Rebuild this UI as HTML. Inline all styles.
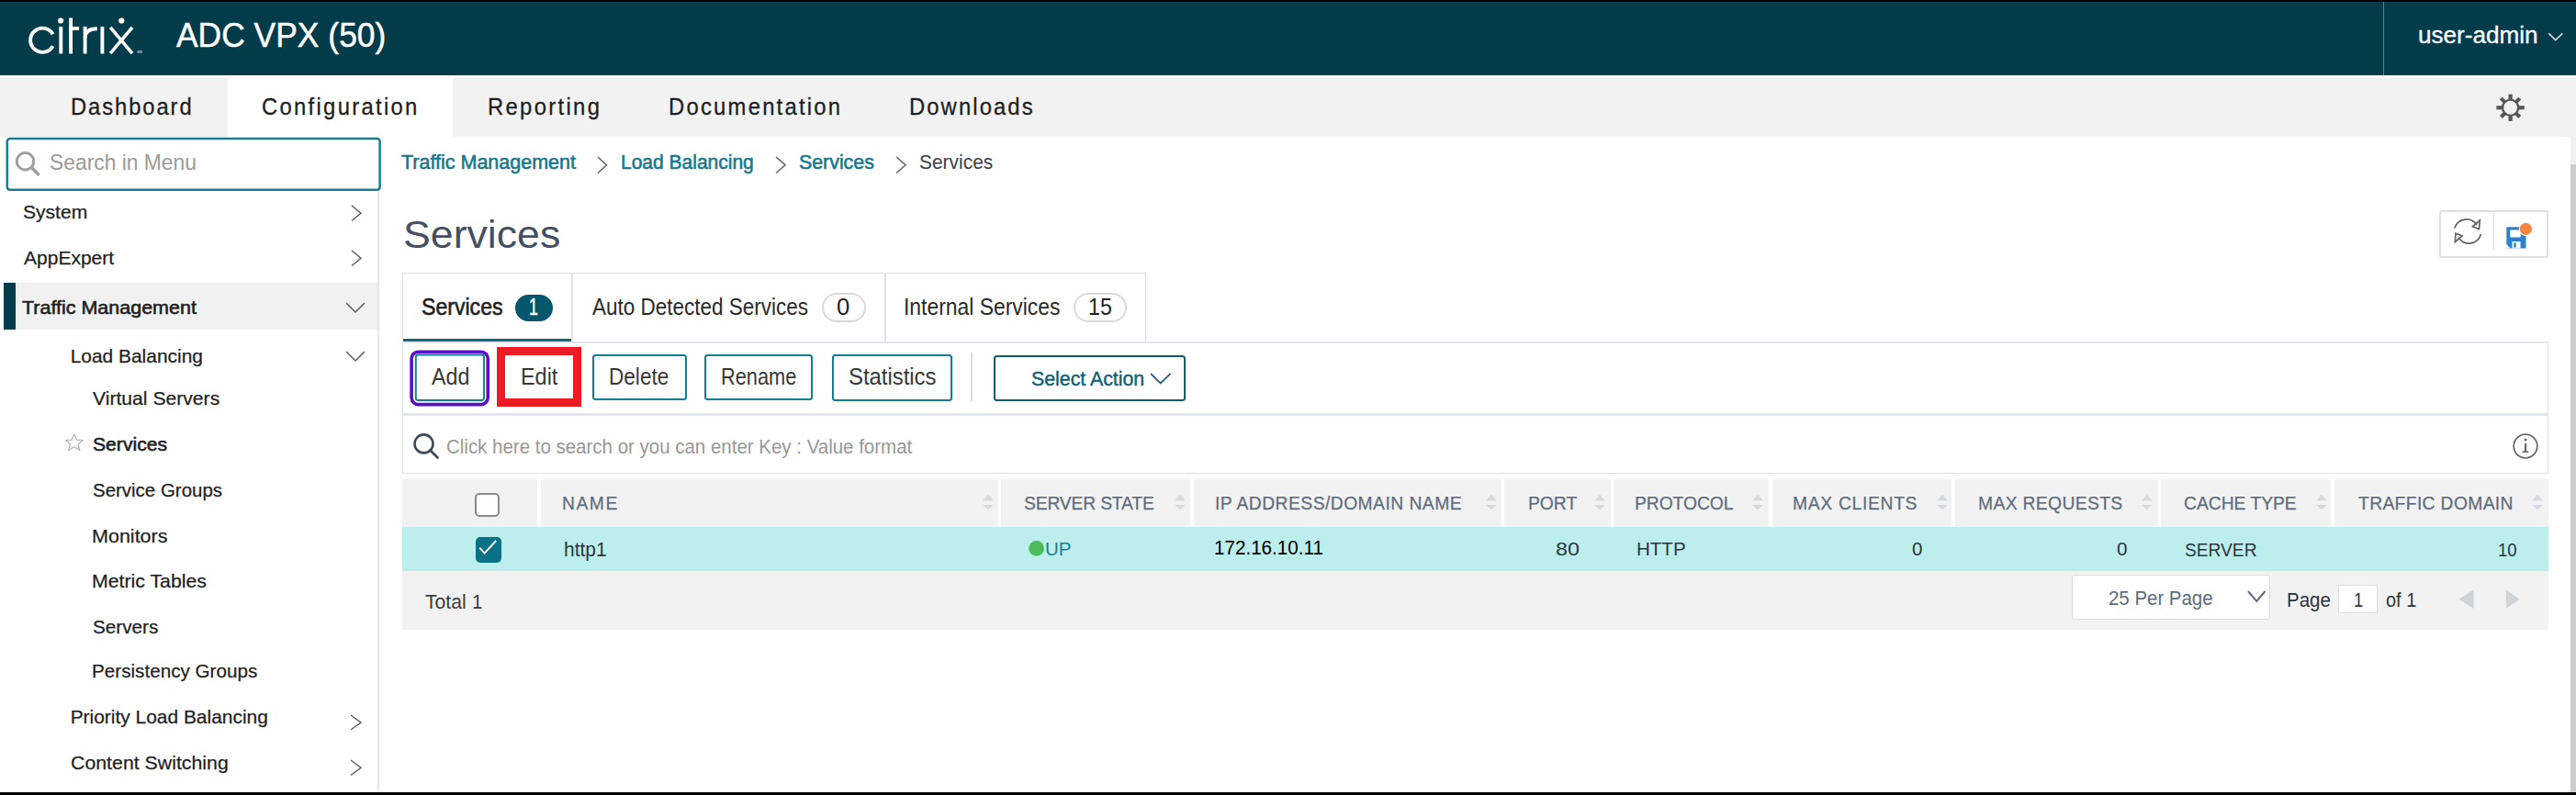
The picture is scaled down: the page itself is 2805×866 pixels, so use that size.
<!DOCTYPE html>
<html><head><meta charset="utf-8"><title>Citrix ADC - Services</title>
<style>
html,body{margin:0;padding:0;}
body{width:2805px;height:866px;overflow:hidden;position:relative;background:#fff;font-family:"Liberation Sans",sans-serif;}
.a{position:absolute;box-sizing:border-box;}
.t{position:absolute;white-space:nowrap;line-height:1;transform-origin:0 0;font-family:"Liberation Sans",sans-serif;}
svg{position:absolute;overflow:visible;}
</style></head><body>

<div class="a" style="left:0;top:0;width:2805px;height:2px;background:#000"></div>
<div class="a" style="left:0;top:2px;width:2805px;height:80px;background:#023c4b"></div>
<div class="a" style="left:2594.5px;top:2px;width:1.5px;height:80px;background:#5b7d87"></div>
<svg style="left:0;top:0" width="170" height="70" viewBox="0 0 170 70">
 <g fill="none" stroke="#fff" stroke-width="3.9">
  <path d="M57.6 37.3 A13.1 13.1 0 1 0 57.6 50.2"/>
  <line x1="66.3" y1="29" x2="66.3" y2="58.5"/>
  <line x1="77.1" y1="19.5" x2="77.1" y2="58.5"/>
  <line x1="75" y1="31" x2="86.1" y2="31"/>
  <line x1="92.6" y1="29" x2="92.6" y2="58.5"/>
  <path d="M92.6 41 C93 34 97.5 31.3 105.8 31.3"/>
  <line x1="111.4" y1="29" x2="111.4" y2="58.5"/>
 </g>
 <g fill="none" stroke="#fff" stroke-width="3.6" stroke-linecap="butt">
  <line x1="120.2" y1="29.8" x2="144" y2="58.2"/>
  <line x1="144" y1="29.8" x2="120.2" y2="58.2"/>
 </g>
 <circle cx="66.1" cy="22.5" r="3.1" fill="#fff"/>
 <circle cx="132.3" cy="22.5" r="3.1" fill="#fff"/>
 <rect x="149.5" y="55" width="5.5" height="3" fill="#6f8c94"/>
</svg>
<svg style="left:2770px;top:30px" width="26" height="20" viewBox="0 0 26 20"><path d="M5.3 6.4 L12.8 13.6 L20.3 6.4" fill="none" stroke="#d5dde0" stroke-width="1.5"/></svg>

<div class="a" style="left:0;top:82px;width:2805px;height:3px;background:#fbfbfb"></div>
<div class="a" style="left:0;top:85px;width:2805px;height:63.5px;background:#f2f2f2"></div>
<div class="a" style="left:247.5px;top:85px;width:245px;height:64px;background:#fff"></div>
<svg style="left:2713px;top:97px" width="41" height="41" viewBox="0 0 41 41">
 <g transform="translate(20.6,20.3)" fill="#575757">
  <rect x="-2.1" y="-14.6" width="4.2" height="6.5" />
  <rect x="-2.1" y="8.1" width="4.2" height="6.5" />
  <rect x="-15.2" y="-2.1" width="6.8" height="4.2" />
  <rect x="8.4" y="-2.1" width="6.8" height="4.2" />
  <g transform="rotate(45)">
   <rect x="-2.1" y="-14.4" width="4.2" height="6" />
   <rect x="-2.1" y="8.4" width="4.2" height="6" />
   <rect x="-14.4" y="-2.1" width="6" height="4.2" />
   <rect x="8.4" y="-2.1" width="6" height="4.2" />
  </g>
  <circle r="8.6" fill="none" stroke="#575757" stroke-width="2.3"/>
 </g>
</svg>

<!-- sidebar -->
<svg style="left:0;top:140px" width="430" height="75" viewBox="0 140 430 75"><rect x="7.8" y="151" width="405.8" height="55.8" rx="3" fill="#fff" stroke="#1a7d91" stroke-width="2.5"/></svg>
<svg style="left:14px;top:162px" width="34" height="34" viewBox="0 0 34 34"><circle cx="13.5" cy="13.8" r="9.2" fill="none" stroke="#a0a0a0" stroke-width="3"/><line x1="20.5" y1="20.8" x2="27.5" y2="27.8" stroke="#a0a0a0" stroke-width="3.6" stroke-linecap="round"/></svg>
<div class="a" style="left:411px;top:208px;width:2px;height:655px;background:#e6e6ea"></div>
<div class="a" style="left:17px;top:308.3px;width:393.5px;height:51px;background:#f1f1f1"></div>
<div class="a" style="left:4px;top:308.3px;width:13px;height:51px;background:#023c4b"></div>
<svg style="left:381px;top:222px" width="14" height="20.5" viewBox="381 222 14 20.5"><path d="M383 224 L393 232.25 L383 240.5" fill="none" stroke="#5c5c5c" stroke-width="1.45"/></svg>
<svg style="left:381px;top:271px" width="14" height="20.5" viewBox="381 271 14 20.5"><path d="M383 273 L393 281.25 L383 289.5" fill="none" stroke="#5c5c5c" stroke-width="1.45"/></svg>
<svg style="left:375px;top:327.5px" width="24" height="14.0" viewBox="375 327.5 24 14.0"><path d="M377 329.5 L387.0 339.5 L397 329.5" fill="none" stroke="#5c5c5c" stroke-width="1.45"/></svg>
<svg style="left:375px;top:381px" width="24" height="14" viewBox="375 381 24 14"><path d="M377 383 L387.0 393 L397 383" fill="none" stroke="#5c5c5c" stroke-width="1.45"/></svg>
<svg style="left:380px;top:776.5px" width="15" height="20.0" viewBox="380 776.5 15 20.0"><path d="M382 778.5 L393 786.5 L382 794.5" fill="none" stroke="#5c5c5c" stroke-width="1.45"/></svg>
<svg style="left:380px;top:825.5px" width="15" height="20.5" viewBox="380 825.5 15 20.5"><path d="M382 827.5 L393 835.75 L382 844" fill="none" stroke="#5c5c5c" stroke-width="1.45"/></svg>
<svg style="left:68px;top:471px" width="26" height="22" viewBox="0 0 26 22"><path d="M12.8 2 L15.6 8.2 L22.3 8.6 L17.1 12.9 L18.8 19.5 L12.8 15.8 L6.8 19.5 L8.5 12.9 L3.3 8.6 L10 8.2 Z" fill="none" stroke="#b5b5b5" stroke-width="1.3" stroke-linejoin="round"/></svg>
<svg style="left:649px;top:168.5px" width="13.5" height="21.5" viewBox="649 168.5 13.5 21.5"><path d="M651 170.5 L660.5 179.25 L651 188" fill="none" stroke="#626674" stroke-width="1.6"/></svg>
<svg style="left:843px;top:168.5px" width="14" height="21.5" viewBox="843 168.5 14 21.5"><path d="M845 170.5 L855 179.25 L845 188" fill="none" stroke="#626674" stroke-width="1.6"/></svg>
<svg style="left:973.5px;top:168.5px" width="14.0" height="21.5" viewBox="973.5 168.5 14.0 21.5"><path d="M975.5 170.5 L985.5 179.25 L975.5 188" fill="none" stroke="#626674" stroke-width="1.6"/></svg>

<div class="a" style="left:2655.5px;top:228.8px;width:119.3px;height:52.4px;border:2px solid #e0e0e0;border-radius:3px;background:#fff"></div>
<div class="a" style="left:2714.5px;top:232px;width:1.5px;height:40px;background:#d8d8d8"></div>
<svg style="left:2666px;top:232px" width="42" height="40" viewBox="0 0 42 40">
 <g fill="none" stroke="#636363" stroke-width="1.7">
  <path d="M6.8 16.5 A13.5 13.5 0 0 1 31 13"/>
  <path d="M35.5 23 A13.5 13.5 0 0 1 11.2 27"/>
  <path d="M34.3 8 L33.5 17.5 L26.5 14.8 Z" fill="none"/>
  <path d="M7.3 31.5 L8 22.3 L15 25 Z" fill="none"/>
 </g>
</svg>
<svg style="left:2725px;top:240px" width="40" height="36" viewBox="0 0 40 36">
 <path d="M4.3 7.3 H25.5 V30.5 H4.3 Z" fill="#2f7fd1"/>
 <path d="M4.3 26 L8.5 30.5 H4.3 Z" fill="#fff"/>
 <rect x="8.2" y="10.5" width="11.5" height="8" fill="#fff"/>
 <rect x="10.5" y="23" width="9" height="7.5" fill="#fff"/>
 <rect x="12.2" y="24.5" width="2.5" height="5" fill="#2f7fd1"/>
 <circle cx="25.4" cy="9.4" r="7.6" fill="#fff"/>
 <circle cx="25.4" cy="9.4" r="6.6" fill="#f5853d"/>
</svg>

<div class="a" style="left:437.6px;top:297px;width:810.3px;height:76px;border:1.5px solid #dedede;border-bottom:none;background:#fff"></div>
<div class="a" style="left:621.8px;top:298px;width:1.8px;height:75px;background:#e2e2e2"></div>
<div class="a" style="left:963px;top:298px;width:1.5px;height:75px;background:#e2e2e2"></div>
<div class="a" style="left:560.8px;top:320.7px;width:41px;height:29.5px;border-radius:15px;background:#03566b"></div>
<div class="a" style="left:894.5px;top:319.3px;width:48.7px;height:32px;border-radius:16px;border:2px solid #dadada"></div>
<div class="a" style="left:1168.5px;top:319.3px;width:58.5px;height:32px;border-radius:16px;border:2px solid #dadada"></div>
<div class="a" style="left:437.6px;top:372.2px;width:2337px;height:81.3px;border:1px solid #dfe3e8;border-top:2px solid #e4e7eb;border-bottom:3px solid #e3e6ea;background:#fff"></div>
<div class="a" style="left:438.6px;top:368.8px;width:183.6px;height:3.5px;background:#0a6a80"></div>
<svg style="left:440px;top:375px" width="100" height="75" viewBox="440 375 100 75"><rect x="448.1" y="383.2" width="83.1" height="57.4" rx="7.5" fill="none" stroke="#5a10c8" stroke-width="3.6"/><rect x="452.8" y="386.5" width="74.2" height="49.5" rx="2.5" fill="none" stroke="#127d8f" stroke-width="1.9"/></svg>
<div class="a" style="left:644.5px;top:385.6px;width:103px;height:50.9px;border:2px solid #127d8f;border-radius:3.5px"></div>
<div class="a" style="left:766.7px;top:385.6px;width:118.1px;height:50.9px;border:2px solid #127d8f;border-radius:3.5px"></div>
<div class="a" style="left:905.6px;top:385.7px;width:131px;height:51.3px;border:2px solid #127d8f;border-radius:3.5px"></div>
<div class="a" style="left:1057.3px;top:384px;width:1.5px;height:53px;background:#dcdcdc"></div>
<div class="a" style="left:1081.5px;top:387px;width:209px;height:50px;border:2px solid #0e5d70;border-radius:3.5px"></div>
<div class="a" style="left:540.7px;top:378px;width:92.4px;height:64.6px;border:9px solid #ed1c24"></div>
<div class="a" style="left:437.6px;top:453.5px;width:2337px;height:62.5px;border:1px solid #dde2e7;border-top:none;border-bottom:1.5px solid #d9dfe5;background:#fff"></div>
<svg style="left:445px;top:467px" width="40" height="40" viewBox="0 0 40 40"><circle cx="16.5" cy="16.4" r="10" fill="none" stroke="#3e4a5b" stroke-width="2.6"/><line x1="23.5" y1="23.5" x2="31.5" y2="31.5" stroke="#3e4a5b" stroke-width="2.8" stroke-linecap="round"/></svg>
<svg style="left:2730px;top:466px" width="40" height="40" viewBox="0 0 40 40"><circle cx="20" cy="20" r="12.8" fill="none" stroke="#6a6a6a" stroke-width="1.8"/><rect x="18.9" y="17" width="2.3" height="9.5" fill="#6a6a6a"/><circle cx="20.05" cy="13" r="1.5" fill="#6a6a6a"/><rect x="16.5" y="25.5" width="7" height="1.6" fill="#6a6a6a"/></svg>
<svg style="left:1251px;top:405px" width="25.5" height="14.5" viewBox="1251 405 25.5 14.5"><path d="M1253 407 L1263.75 417.5 L1274.5 407" fill="none" stroke="#2f5f86" stroke-width="1.8"/></svg>

<div class="a" style="left:437.6px;top:522.3px;width:2337.1px;height:51.8px;background:#f2f2f2"></div>
<div class="a" style="left:437.6px;top:574.1px;width:2337.1px;height:48.2px;background:#bbeeec"></div>
<div class="a" style="left:437.6px;top:622.3px;width:2337.1px;height:64.1px;background:#f2f2f2"></div>
<div class="a" style="left:516.7px;top:537px;width:27.5px;height:25.6px;border:2px solid #8c8c8c;border-radius:5px;background:#fff"></div>
<div class="a" style="left:518.4px;top:584.8px;width:27.8px;height:28px;border-radius:5px;background:#087185"></div>
<svg style="left:518px;top:584px" width="30" height="30" viewBox="0 0 30 30"><path d="M4.3 12.6 L9.6 18.6 L22.2 5" fill="none" stroke="#fff" stroke-width="1.9"/></svg>
<svg style="left:1119.5px;top:588.8px" width="18" height="18" viewBox="0 0 18 18"><circle cx="8.6" cy="8.4" r="8.4" fill="#4dbb5b"/></svg>
<div class="a" style="left:585px;top:522.3px;width:4px;height:51.8px;background:#fff"></div>
<div class="a" style="left:1086.8px;top:522.3px;width:3.7000000000000455px;height:51.8px;background:#fff"></div>
<div class="a" style="left:1296.3px;top:522.3px;width:3.5px;height:51.8px;background:#fff"></div>
<div class="a" style="left:1634.6px;top:522.3px;width:3.800000000000182px;height:51.8px;background:#fff"></div>
<div class="a" style="left:1753.5px;top:522.3px;width:3.5px;height:51.8px;background:#fff"></div>
<div class="a" style="left:1925.5px;top:522.3px;width:4.0px;height:51.8px;background:#fff"></div>
<div class="a" style="left:2125.3px;top:522.3px;width:4.0px;height:51.8px;background:#fff"></div>
<div class="a" style="left:2349.5px;top:522.3px;width:3.800000000000182px;height:51.8px;background:#fff"></div>
<div class="a" style="left:2538.3px;top:522.3px;width:3.599999999999909px;height:51.8px;background:#fff"></div>
<svg style="left:1067.5px;top:536px" width="16" height="22" viewBox="0 0 16 22"><path d="M2 9.4 L8 2.8 L14 9.4 Z M2 14 L14 14 L8 19.3 Z" fill="#d6dae0"/></svg>
<svg style="left:1276.8px;top:536px" width="16" height="22" viewBox="0 0 16 22"><path d="M2 9.4 L8 2.8 L14 9.4 Z M2 14 L14 14 L8 19.3 Z" fill="#d6dae0"/></svg>
<svg style="left:1616px;top:536px" width="16" height="22" viewBox="0 0 16 22"><path d="M2 9.4 L8 2.8 L14 9.4 Z M2 14 L14 14 L8 19.3 Z" fill="#d6dae0"/></svg>
<svg style="left:1733.6px;top:536px" width="16" height="22" viewBox="0 0 16 22"><path d="M2 9.4 L8 2.8 L14 9.4 Z M2 14 L14 14 L8 19.3 Z" fill="#d6dae0"/></svg>
<svg style="left:1906.3px;top:536px" width="16" height="22" viewBox="0 0 16 22"><path d="M2 9.4 L8 2.8 L14 9.4 Z M2 14 L14 14 L8 19.3 Z" fill="#d6dae0"/></svg>
<svg style="left:2107.3px;top:536px" width="16" height="22" viewBox="0 0 16 22"><path d="M2 9.4 L8 2.8 L14 9.4 Z M2 14 L14 14 L8 19.3 Z" fill="#d6dae0"/></svg>
<svg style="left:2330.2px;top:536px" width="16" height="22" viewBox="0 0 16 22"><path d="M2 9.4 L8 2.8 L14 9.4 Z M2 14 L14 14 L8 19.3 Z" fill="#d6dae0"/></svg>
<svg style="left:2520px;top:536px" width="16" height="22" viewBox="0 0 16 22"><path d="M2 9.4 L8 2.8 L14 9.4 Z M2 14 L14 14 L8 19.3 Z" fill="#d6dae0"/></svg>
<svg style="left:2754.8px;top:536px" width="16" height="22" viewBox="0 0 16 22"><path d="M2 9.4 L8 2.8 L14 9.4 Z M2 14 L14 14 L8 19.3 Z" fill="#d6dae0"/></svg>

<div class="a" style="left:2255.5px;top:626.4px;width:216.8px;height:48.6px;border:1.5px solid #dadde2;border-radius:3px;background:#fff"></div>
<div class="a" style="left:2546.4px;top:637.4px;width:43px;height:30.3px;border:1.5px solid #dce0e6;background:#fff"></div>
<svg style="left:2674px;top:640px" width="24" height="26" viewBox="0 0 24 26"><path d="M19.6 2.6 L3.4 12.8 L19.6 23 Z" fill="#cfd3da"/></svg>
<svg style="left:2726px;top:640px" width="24" height="26" viewBox="0 0 24 26"><path d="M2.8 2.6 L17.8 12.8 L2.8 23 Z" fill="#cfd3da"/></svg>
<svg style="left:2445.5px;top:642px" width="22.5" height="15" viewBox="2445.5 642 22.5 15"><path d="M2447.5 644 L2456.75 655 L2466 644" fill="none" stroke="#5e6c7e" stroke-width="2.0"/></svg>

<div class="a" style="left:2799px;top:149px;width:6px;height:30px;background:#f1f1f1"></div>
<div class="a" style="left:2799px;top:179px;width:6px;height:684px;background:#cdcdcd"></div>
<div class="a" style="left:0;top:863px;width:2805px;height:3px;background:#000"></div>
<div class="t" id="t0" style="left:192.00px;top:20.01px;font-size:37.50px;color:#ffffff;transform:scaleX(0.9445);-webkit-text-stroke:0.5px #ffffff;">ADC VPX (50)</div>
<div class="t" id="t1" style="left:2633.37px;top:26.30px;font-size:24.92px;color:#ffffff;transform:scaleX(1.0486);-webkit-text-stroke:0.3px #ffffff;">user-admin</div>
<div class="t" id="t2" style="left:77.14px;top:102.60px;font-size:26.45px;color:#1e1e1e;transform:scaleX(0.9000);letter-spacing:2.114px;-webkit-text-stroke:0.3px #1e1e1e;">Dashboard</div>
<div class="t" id="t3" style="left:285.18px;top:102.60px;font-size:26.45px;color:#1e1e1e;transform:scaleX(0.9000);letter-spacing:2.568px;-webkit-text-stroke:0.3px #1e1e1e;">Configuration</div>
<div class="t" id="t4" style="left:530.54px;top:102.60px;font-size:26.45px;color:#1e1e1e;transform:scaleX(0.9000);letter-spacing:2.606px;-webkit-text-stroke:0.3px #1e1e1e;">Reporting</div>
<div class="t" id="t5" style="left:728.14px;top:102.60px;font-size:26.45px;color:#1e1e1e;transform:scaleX(0.9000);letter-spacing:2.505px;-webkit-text-stroke:0.3px #1e1e1e;">Documentation</div>
<div class="t" id="t6" style="left:990.14px;top:102.60px;font-size:26.45px;color:#1e1e1e;transform:scaleX(0.9000);letter-spacing:2.336px;-webkit-text-stroke:0.3px #1e1e1e;">Downloads</div>
<div class="t" id="t7" style="left:54.29px;top:165.31px;font-size:24.71px;color:#9a9a9a;transform:scaleX(0.9245);">Search in Menu</div>
<div class="t" id="t8" style="left:436.96px;top:165.81px;font-size:21.22px;color:#16788c;transform:scaleX(1.0129);-webkit-text-stroke:0.55px #16788c;">Traffic Management</div>
<div class="t" id="t9" style="left:676.36px;top:165.81px;font-size:21.22px;color:#16788c;transform:scaleX(0.9898);-webkit-text-stroke:0.55px #16788c;">Load Balancing</div>
<div class="t" id="t10" style="left:870.33px;top:165.81px;font-size:21.22px;color:#16788c;transform:scaleX(1.0057);-webkit-text-stroke:0.55px #16788c;">Services</div>
<div class="t" id="t11" style="left:1001.35px;top:165.81px;font-size:21.22px;color:#3a3f47;transform:scaleX(0.9869);">Services</div>
<div class="t" id="t12" style="left:438.70px;top:235.40px;font-size:42.30px;color:#434f63;transform:scaleX(1.0561);">Services</div>
<div class="t" id="t13" style="left:24.84px;top:221.21px;font-size:20.93px;color:#1f1f1f;transform:scaleX(1.0067);-webkit-text-stroke:0.25px #1f1f1f;">System</div>
<div class="t" id="t14" style="left:25.50px;top:270.80px;font-size:20.93px;color:#1f1f1f;transform:scaleX(1.0040);-webkit-text-stroke:0.25px #1f1f1f;">AppExpert</div>
<div class="t" id="t15" style="left:23.96px;top:324.52px;font-size:20.93px;color:#1f1f1f;transform:scaleX(1.0270);-webkit-text-stroke:0.6px #1f1f1f;">Traffic Management</div>
<div class="t" id="t16" style="left:76.67px;top:378.11px;font-size:20.93px;color:#1f1f1f;-webkit-text-stroke:0.25px #1f1f1f;">Load Balancing</div>
<div class="t" id="t17" style="left:101.40px;top:423.91px;font-size:20.93px;color:#1f1f1f;transform:scaleX(1.0101);-webkit-text-stroke:0.25px #1f1f1f;">Virtual Servers</div>
<div class="t" id="t18" style="left:100.74px;top:474.21px;font-size:20.93px;color:#1f1f1f;transform:scaleX(1.0108);-webkit-text-stroke:0.6px #1f1f1f;">Services</div>
<div class="t" id="t19" style="left:100.76px;top:523.71px;font-size:20.93px;color:#1f1f1f;transform:scaleX(0.9781);-webkit-text-stroke:0.25px #1f1f1f;">Service Groups</div>
<div class="t" id="t20" style="left:99.72px;top:573.80px;font-size:20.93px;color:#1f1f1f;transform:scaleX(1.0286);-webkit-text-stroke:0.25px #1f1f1f;">Monitors</div>
<div class="t" id="t21" style="left:99.74px;top:623.30px;font-size:20.93px;color:#1f1f1f;transform:scaleX(1.0173);-webkit-text-stroke:0.25px #1f1f1f;">Metric Tables</div>
<div class="t" id="t22" style="left:100.75px;top:672.80px;font-size:20.93px;color:#1f1f1f;transform:scaleX(0.9901);-webkit-text-stroke:0.25px #1f1f1f;">Servers</div>
<div class="t" id="t23" style="left:99.79px;top:721.41px;font-size:20.93px;color:#1f1f1f;transform:scaleX(0.9876);-webkit-text-stroke:0.25px #1f1f1f;">Persistency Groups</div>
<div class="t" id="t24" style="left:76.66px;top:771.21px;font-size:20.93px;color:#1f1f1f;-webkit-text-stroke:0.25px #1f1f1f;">Priority Load Balancing</div>
<div class="t" id="t25" style="left:77.30px;top:820.61px;font-size:20.93px;color:#1f1f1f;transform:scaleX(1.0189);-webkit-text-stroke:0.25px #1f1f1f;">Content Switching</div>
<div class="t" id="t26" style="left:458.98px;top:320.91px;font-size:26.60px;color:#1f1f1f;transform:scaleX(0.8681);-webkit-text-stroke:0.6px #1f1f1f;">Services</div>
<div class="t" id="t27" style="left:576.20px;top:321.91px;font-size:25.73px;color:#ffffff;transform:scaleX(0.6862);-webkit-text-stroke:0.5px #ffffff;">1</div>
<div class="t" id="t28" style="left:645.40px;top:320.82px;font-size:26.60px;color:#2a2a2a;transform:scaleX(0.8458);">Auto Detected Services</div>
<div class="t" id="t29" style="left:911.00px;top:320.81px;font-size:26.02px;color:#1f1f1f;transform:scaleX(0.9839);">0</div>
<div class="t" id="t30" style="left:983.91px;top:320.82px;font-size:26.60px;color:#2a2a2a;transform:scaleX(0.8607);">Internal Services</div>
<div class="t" id="t31" style="left:1184.55px;top:320.81px;font-size:26.02px;color:#1f1f1f;transform:scaleX(0.8911);">15</div>
<div class="t" id="t32" style="left:470.00px;top:396.82px;font-size:26.60px;color:#383838;transform:scaleX(0.8727);">Add</div>
<div class="t" id="t33" style="left:566.57px;top:396.82px;font-size:26.60px;color:#383838;transform:scaleX(0.8803);">Edit</div>
<div class="t" id="t34" style="left:663.44px;top:396.61px;font-size:26.60px;color:#383838;transform:scaleX(0.8490);">Delete</div>
<div class="t" id="t35" style="left:785.20px;top:396.61px;font-size:26.60px;color:#383838;transform:scaleX(0.8184);">Rename</div>
<div class="t" id="t36" style="left:923.95px;top:396.71px;font-size:26.60px;color:#383838;transform:scaleX(0.8973);">Statistics</div>
<div class="t" id="t37" style="left:1123.33px;top:402.40px;font-size:21.22px;color:#0c6175;transform:scaleX(1.0041);-webkit-text-stroke:0.4px #0c6175;">Select Action</div>
<div class="t" id="t38" style="left:485.64px;top:476.40px;font-size:21.22px;color:#989898;transform:scaleX(0.9650);">Click here to search or you can enter Key : Value format</div>
<div class="t" id="t39" style="left:612.49px;top:538.31px;font-size:20.49px;color:#5e6c7e;transform:scaleX(0.9400);letter-spacing:1.651px;-webkit-text-stroke:0.25px #5e6c7e;">NAME</div>
<div class="t" id="t40" style="left:1115.00px;top:538.31px;font-size:20.49px;color:#5e6c7e;transform:scaleX(0.9400);letter-spacing:-0.159px;-webkit-text-stroke:0.25px #5e6c7e;">SERVER STATE</div>
<div class="t" id="t41" style="left:1323.29px;top:538.31px;font-size:20.49px;color:#5e6c7e;transform:scaleX(0.9400);letter-spacing:0.502px;-webkit-text-stroke:0.25px #5e6c7e;">IP ADDRESS/DOMAIN NAME</div>
<div class="t" id="t42" style="left:1663.79px;top:538.31px;font-size:20.49px;color:#5e6c7e;transform:scaleX(0.9400);letter-spacing:0.024px;-webkit-text-stroke:0.25px #5e6c7e;">PORT</div>
<div class="t" id="t43" style="left:1780.49px;top:538.31px;font-size:20.49px;color:#5e6c7e;transform:scaleX(0.9400);letter-spacing:-0.042px;-webkit-text-stroke:0.25px #5e6c7e;">PROTOCOL</div>
<div class="t" id="t44" style="left:1952.49px;top:538.31px;font-size:20.49px;color:#5e6c7e;transform:scaleX(0.9400);letter-spacing:0.751px;-webkit-text-stroke:0.25px #5e6c7e;">MAX CLIENTS</div>
<div class="t" id="t45" style="left:2154.49px;top:538.31px;font-size:20.49px;color:#5e6c7e;transform:scaleX(0.9400);letter-spacing:0.400px;-webkit-text-stroke:0.25px #5e6c7e;">MAX REQUESTS</div>
<div class="t" id="t46" style="left:2377.70px;top:538.31px;font-size:20.49px;color:#5e6c7e;transform:scaleX(0.9400);letter-spacing:0.001px;-webkit-text-stroke:0.25px #5e6c7e;">CACHE TYPE</div>
<div class="t" id="t47" style="left:2567.70px;top:538.31px;font-size:20.49px;color:#5e6c7e;transform:scaleX(0.9400);letter-spacing:0.395px;-webkit-text-stroke:0.25px #5e6c7e;">TRAFFIC DOMAIN</div>
<div class="t" id="t48" style="left:614.19px;top:586.71px;font-size:22.82px;color:#2e3540;transform:scaleX(0.9194);">http1</div>
<div class="t" id="t49" style="left:1138.22px;top:587.00px;font-size:21.08px;color:#1b7e92;transform:scaleX(0.9750);">UP</div>
<div class="t" id="t50" style="left:1322.21px;top:585.76px;font-size:21.80px;color:#000000;transform:scaleX(0.9462);">172.16.10.11</div>
<div class="t" id="t51" style="left:1693.68px;top:587.20px;font-size:21.08px;color:#2e3540;transform:scaleX(1.1007);">80</div>
<div class="t" id="t52" style="left:1782.00px;top:587.20px;font-size:21.08px;color:#2e3540;transform:scaleX(0.9734);">HTTP</div>
<div class="t" id="t53" style="left:2081.76px;top:587.20px;font-size:21.08px;color:#2e3540;transform:scaleX(0.9679);">0</div>
<div class="t" id="t54" style="left:2304.76px;top:587.20px;font-size:21.08px;color:#2e3540;transform:scaleX(0.9774);">0</div>
<div class="t" id="t55" style="left:2379.20px;top:587.61px;font-size:21.08px;color:#2e3540;transform:scaleX(0.9093);">SERVER</div>
<div class="t" id="t56" style="left:2720.44px;top:587.61px;font-size:21.08px;color:#2e3540;transform:scaleX(0.8842);">10</div>
<div class="t" id="t57" style="left:462.67px;top:645.20px;font-size:22.09px;color:#3b3b3b;transform:scaleX(0.9584);">Total</div>
<div class="t" id="t58" style="left:513.72px;top:645.20px;font-size:22.09px;color:#3b3b3b;transform:scaleX(0.9290);">1</div>
<div class="t" id="t59" style="left:2296.44px;top:640.71px;font-size:21.80px;color:#5e6c7e;transform:scaleX(0.9371);">25 Per Page</div>
<div class="t" id="t60" style="left:2489.80px;top:643.51px;font-size:21.51px;color:#2e3540;transform:scaleX(0.9520);">Page</div>
<div class="t" id="t61" style="left:2562.76px;top:643.51px;font-size:21.51px;color:#2e3540;transform:scaleX(0.8515);">1</div>
<div class="t" id="t62" style="left:2597.88px;top:643.51px;font-size:21.51px;color:#2e3540;transform:scaleX(0.9261);">of 1</div></body></html>
